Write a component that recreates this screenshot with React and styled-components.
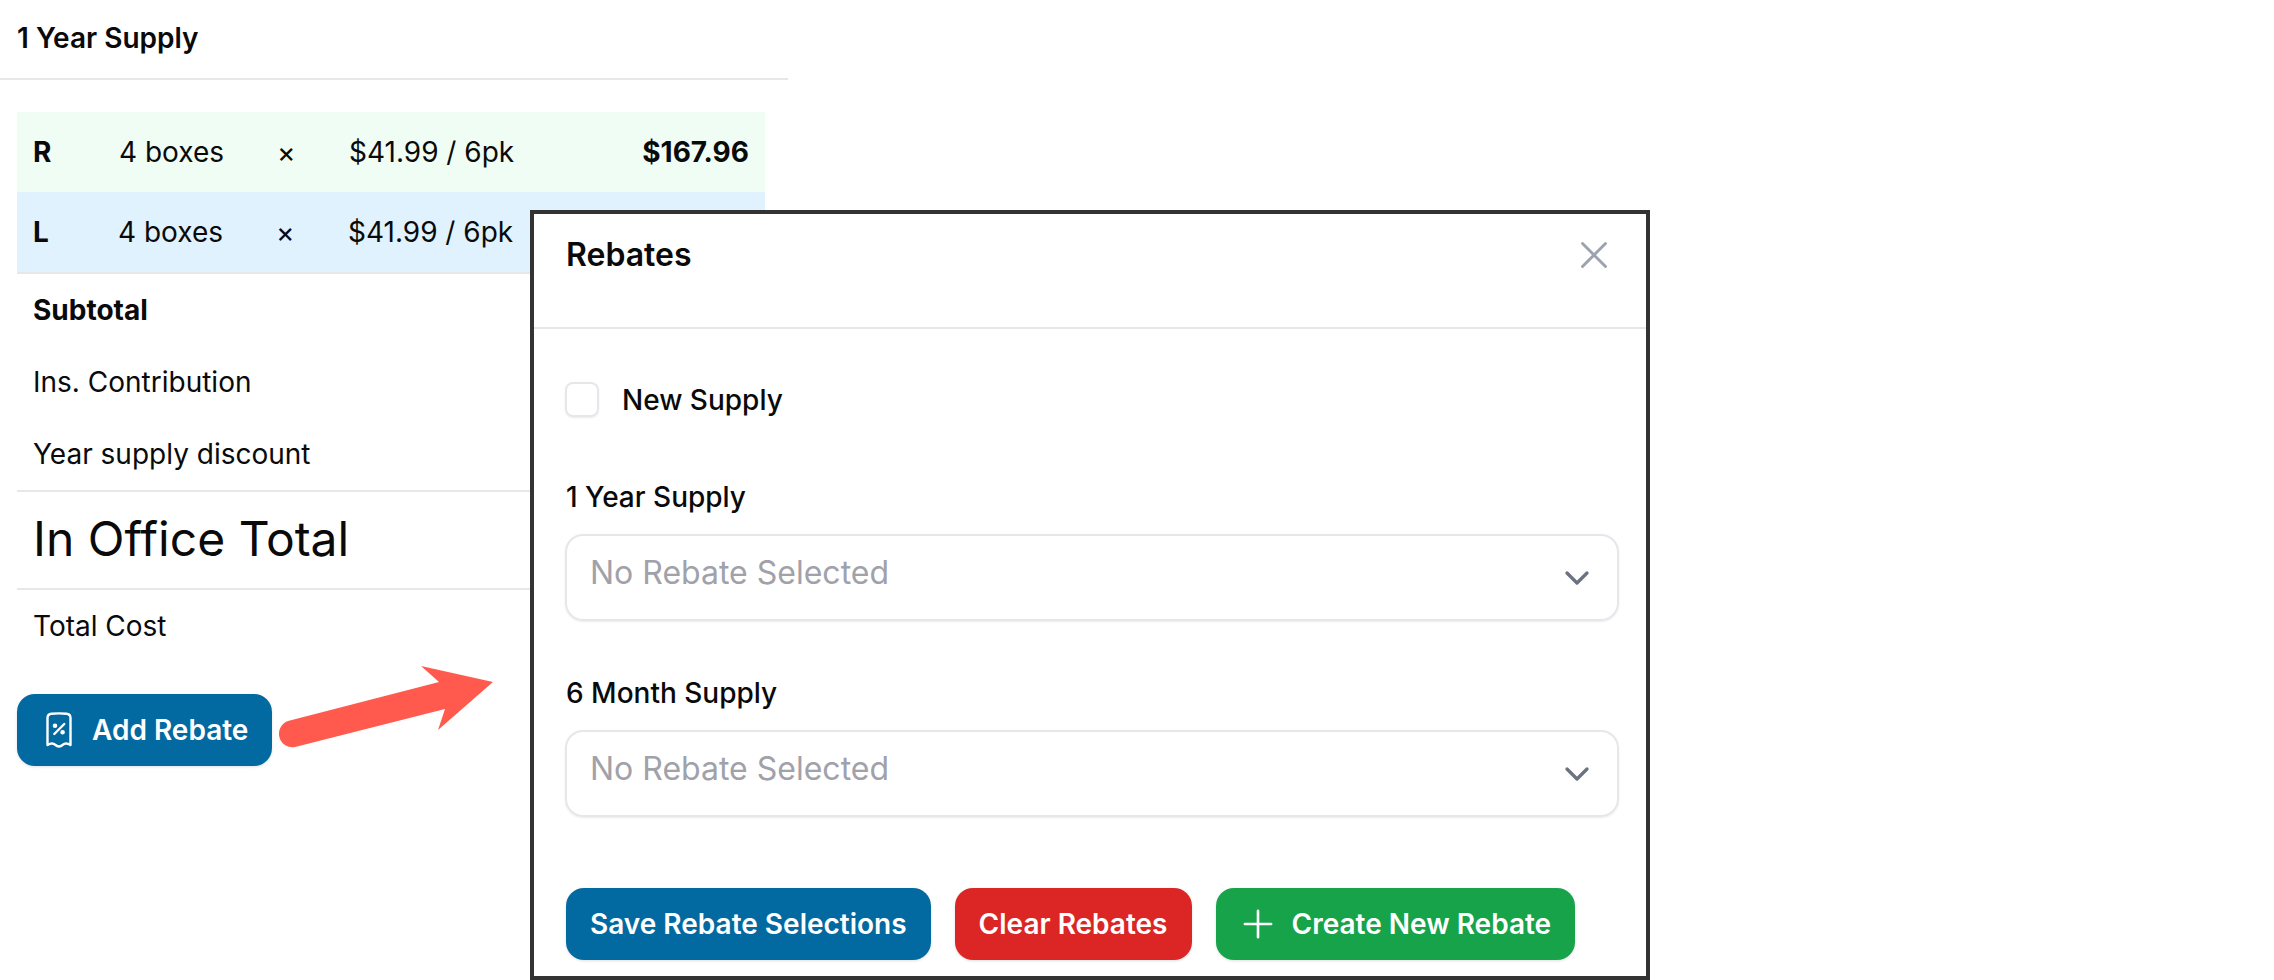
import styled, { createGlobalStyle } from "styled-components";
import { HiOutlineXMark, HiOutlinePlus, HiOutlineChevronDown } from "react-icons/hi2";

const GlobalStyle = createGlobalStyle`
  * { box-sizing: border-box; }
  html, body { margin: 0; background: #fff; }
  body { font-family: Inter, "Liberation Sans", sans-serif; color: #0a0a0a; }
`;

const Page = styled.div`
  position: relative;
  width: 2274px;
  height: 980px;
  overflow: hidden;
  background: #fff;
`;

const Sidebar = styled.div`
  width: 788px;
`;

const SupplyTitle = styled.div`
  height: 80px;
  padding: 0 17px 2px;
  display: flex;
  align-items: center;
  font-size: 28px;
  font-weight: 600;
  border-bottom: 2px solid #e5e7eb;
`;

const Summary = styled.div`
  margin: 32px 23px 0 17px;
`;

const EyeRow = styled.div`
  height: 80px;
  display: grid;
  grid-template-columns: ${(p) => p.$eyeWidth}px 158px 72px 1fr auto;
  align-items: center;
  padding: 0 16px;
  font-size: 28px;
  background: ${(p) => p.$bg};
`;

const EyeLabel = styled.span`
  font-weight: 700;
`;

const Amount = styled.span`
  font-weight: 700;
`;

const Rows = styled.div`
  border-top: 2px solid #e5e7eb;
`;

const LineRow = styled.div`
  height: 72px;
  display: flex;
  align-items: center;
  padding: 0 16px;
  font-size: 28px;
  font-weight: ${(p) => (p.$bold ? 700 : 400)};
`;

const GrandRow = styled.div`
  height: 100px;
  display: flex;
  align-items: center;
  padding: 0 16px 3px;
  font-size: 48px;
  border-top: 2px solid #e5e7eb;
  border-bottom: 2px solid #e5e7eb;
`;

const RebateArea = styled.div`
  margin: 32px 0 0 17px;
`;

const ActionButton = styled.button`
  display: inline-flex;
  align-items: center;
  height: 72px;
  padding: 0 24px;
  gap: ${(p) => p.$gap || 0}px;
  border: 0;
  border-radius: 18px;
  background: ${(p) => p.$bg};
  color: #fff;
  font-family: inherit;
  font-size: 28px;
  font-weight: 600;
  white-space: nowrap;
  box-shadow: 0 1px 3px rgba(0, 0, 0, 0.12);
`;

const PlusIcon = styled(HiOutlinePlus)`
  margin-left: -3px;
`;

const ReceiptSvg = styled.svg`
  margin-left: 5px;
  flex: none;
`;

const Arrow = styled.svg`
  position: absolute;
  left: 270px;
  top: 660px;
`;

const Modal = styled.div`
  position: absolute;
  left: 530px;
  top: 210px;
  width: 1120px;
  height: 770px;
  border: 4px solid #333;
  background: #fff;
`;

const ModalHeader = styled.div`
  height: 115px;
  padding: 18px 29px 0 32px;
  display: flex;
  justify-content: space-between;
  align-items: flex-start;
  border-bottom: 2px solid #e5e7eb;
  color: #9ca3af;
`;

const ModalTitle = styled.h3`
  margin: 0;
  font-size: 32px;
  line-height: 46px;
  font-weight: 600;
  color: #0a0a0a;
`;

const ModalBody = styled.div`
  padding: 53px 27px 0 31px;
`;

const CheckRow = styled.label`
  display: flex;
  align-items: center;
  gap: 23px;
  height: 35px;
  font-size: 28px;
  font-weight: 500;
`;

const CheckBox = styled.span`
  width: 34px;
  height: 35px;
  border: 2px solid #e5e7eb;
  border-radius: 8px;
  box-shadow: 0 1px 2px rgba(0, 0, 0, 0.08);
`;

const Field = styled.div`
  margin-top: ${(p) => p.$top}px;
`;

const FieldLabel = styled.div`
  font-size: 28px;
  font-weight: 500;
  line-height: 34px;
  padding-left: 1px;
`;

const SelectBox = styled.div`
  margin-top: 20px;
  height: 87px;
  padding: 17px 24px 0 23px;
  display: flex;
  justify-content: space-between;
  align-items: flex-start;
  border: 2px solid #e5e7eb;
  border-radius: 18px;
  font-size: 32px;
  line-height: 40px;
  color: #a1a1aa;
  box-shadow: 0 1px 2px rgba(0, 0, 0, 0.08);
`;

const Chevron = styled(HiOutlineChevronDown)`
  margin-top: 9px;
  color: #6b7280;
`;

const ButtonRow = styled.div`
  margin: 71px 0 0 1px;
  display: flex;
  gap: 24px;
`;

function ReceiptIcon() {
  return (
    <ReceiptSvg width="26" height="36" viewBox="0 0 26 36" fill="none" stroke="#fff" strokeWidth="2.4" strokeLinecap="round" strokeLinejoin="round">
      <path d="M1.5 33V6Q1.5 2 5.5 1.7Q13 1 20.5 1.7Q24.5 2 24.5 6V33C22 31.5 20 31 18 32C16 33.5 15 34.5 13 34.5C11 34.5 10 33.5 8 32C6 31 4 31.5 1.5 33Z" />
      <path d="M8.3 22L18.3 12" />
      <circle cx="9" cy="13.7" r="1.1" fill="#fff" />
      <circle cx="16.6" cy="20.3" r="1.1" fill="#fff" />
    </ReceiptSvg>
  );
}

function Select() {
  return (
    <SelectBox>
      No Rebate Selected
      <Chevron size={32} strokeWidth={2.5} />
    </SelectBox>
  );
}

export default function App() {
  return (
    <Page>
      <GlobalStyle />
      <Sidebar>
        <SupplyTitle>1 Year Supply</SupplyTitle>
        <Summary>
          <EyeRow $bg="#f0fdf4" $eyeWidth={86}>
            <EyeLabel>R</EyeLabel>
            <span>4 boxes</span>
            <span>×</span>
            <span>$41.99 / 6pk</span>
            <Amount>$167.96</Amount>
          </EyeRow>
          <EyeRow $bg="#e0f2fe" $eyeWidth={85}>
            <EyeLabel>L</EyeLabel>
            <span>4 boxes</span>
            <span>×</span>
            <span>$41.99 / 6pk</span>
          </EyeRow>
          <Rows>
            <LineRow $bold>Subtotal</LineRow>
            <LineRow>Ins. Contribution</LineRow>
            <LineRow>Year supply discount</LineRow>
          </Rows>
          <GrandRow>In Office Total</GrandRow>
          <LineRow>Total Cost</LineRow>
        </Summary>
        <RebateArea>
          <ActionButton $bg="#0369a1" $gap={20}>
            <ReceiptIcon />
            Add Rebate
          </ActionButton>
        </RebateArea>
      </Sidebar>

      <Arrow width="240" height="90" viewBox="0 0 240 90">
        <path
          d="M151 6 L223 22 L168 70 L175 49 L25 87 A13.5 13.5 0 0 1 18 61 L169 22 Z"
          fill="#ff5a4d"
        />
      </Arrow>

      <Modal>
        <ModalHeader>
          <ModalTitle>Rebates</ModalTitle>
          <HiOutlineXMark size={46} strokeWidth={1.5} />
        </ModalHeader>
        <ModalBody>
          <CheckRow>
            <CheckBox />
            New Supply
          </CheckRow>
          <Field $top={63}>
            <FieldLabel>1 Year Supply</FieldLabel>
            <Select />
          </Field>
          <Field $top={55}>
            <FieldLabel>6 Month Supply</FieldLabel>
            <Select />
          </Field>
          <ButtonRow>
            <ActionButton $bg="#0369a1">Save Rebate Selections</ActionButton>
            <ActionButton $bg="#dc2626">Clear Rebates</ActionButton>
            <ActionButton $bg="#16a34a" $gap={13}>
              <PlusIcon size={42} strokeWidth={1.5} />
              Create New Rebate
            </ActionButton>
          </ButtonRow>
        </ModalBody>
      </Modal>
    </Page>
  );
}
